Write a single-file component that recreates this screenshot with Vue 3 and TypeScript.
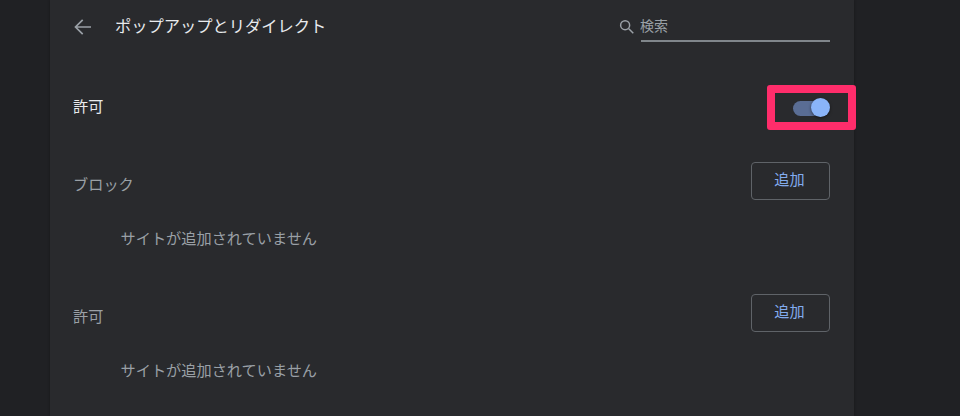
<script setup lang="ts">
interface Section {
  title: string
}
const sections: Section[] = [{ title: 'ブロック' }, { title: '許可' }]
</script>

<template>
  <div class="page">
    <main class="card">
      <header class="header">
        <svg class="back" width="20" height="20" viewBox="0 0 20 20" aria-hidden="true">
          <path d="M18 10H3M9.7 2.8 2.5 10l7.2 7.2" fill="none" stroke="currentColor" stroke-width="1.7" />
        </svg>
        <h1 class="title">ポップアップとリダイレクト</h1>
        <div class="search">
          <svg class="search-icon" width="18" height="18" viewBox="0 0 24 24" aria-hidden="true">
            <circle cx="9.5" cy="9.5" r="6" fill="none" stroke="currentColor" stroke-width="2" />
            <path d="m14 14 6.4 6.4" fill="none" stroke="currentColor" stroke-width="2" />
          </svg>
          <div class="search-field">検索</div>
        </div>
      </header>

      <div class="allow-row">
        <span class="allow-label">許可</span>
        <div class="toggle">
          <span class="track"></span>
          <span class="knob"></span>
          <span class="highlight"></span>
        </div>
      </div>

      <section v-for="s in sections" :key="s.title" class="section">
        <div class="section-head">
          <span class="section-title">{{ s.title }}</span>
          <button class="add" type="button">追加</button>
        </div>
        <p class="empty">サイトが追加されていません</p>
      </section>
    </main>
  </div>
</template>

<style>
html,
body {
  margin: 0;
  background: #202124;
}
</style>

<style scoped>
.page {
  width: 960px;
  height: 416px;
  overflow: hidden;
  background: #202124;
  display: flex;
  font-family: "Roboto", "Noto Sans CJK JP", sans-serif;
}
.card {
  width: 804px;
  height: 416px;
  margin-left: 50px;
  padding: 0 24px 0 23px;
  box-sizing: border-box;
  background: #292a2d;
  box-shadow: 0 0 3px rgba(0, 0, 0, 0.3);
  flex: none;
}
.header {
  height: 54px;
  display: flex;
  align-items: center;
}
.back {
  color: #9aa0a6;
  flex: none;
}
.title {
  margin: 0 0 0 22px;
  font-size: 16.25px;
  line-height: 22px;
  font-weight: 400;
  color: #e8eaed;
  flex: 1;
}
.search {
  display: flex;
  align-items: flex-start;
  height: 31px;
  margin-top: -2px;
}
.search-icon {
  color: #9aa0a6;
  margin: 7px 5px 0 -1px;
}
.search-field {
  width: 189px;
  height: 29px;
  border-bottom: 2px solid #80868b;
  font-size: 14px;
  line-height: 30px;
  color: #9aa0a6;
  text-indent: -1px;
}
.allow-row {
  height: 108px;
  display: flex;
  align-items: center;
  justify-content: space-between;
}
.allow-label {
  font-size: 15.2px;
  color: #e8eaed;
  margin-bottom: 7px;
}
.toggle {
  position: relative;
  width: 37px;
  height: 20px;
}
.track {
  position: absolute;
  left: 0;
  top: 3px;
  width: 34px;
  height: 15px;
  border-radius: 8px;
  background: #5a6d94;
}
.knob {
  position: absolute;
  right: 0;
  top: 0;
  width: 19px;
  height: 19px;
  border-radius: 50%;
  background: #8ab4f8;
  box-shadow: 0 1px 3px rgba(0, 0, 0, 0.5);
}
.highlight {
  position: absolute;
  left: -26px;
  top: -13px;
  width: 89px;
  height: 45px;
  box-sizing: border-box;
  border: 8px solid #ff2d6b;
  border-radius: 3px;
}
.section {
  height: 132px;
}
.section-head {
  height: 38px;
  display: flex;
  align-items: center;
  justify-content: space-between;
}
.section-title {
  font-size: 15.2px;
  color: #9aa0a6;
  margin-top: 4px;
}
.add {
  width: 79px;
  height: 38px;
  box-sizing: border-box;
  background: transparent;
  border: 1.5px solid #5f6368;
  border-radius: 4px;
  color: #82abee;
  font: inherit;
  font-size: 15.2px;
  padding: 0 2px 6px 0;
}
.empty {
  margin: 28px 0 0 47.5px;
  font-size: 15.2px;
  line-height: 22px;
  color: #9aa0a6;
}
</style>
